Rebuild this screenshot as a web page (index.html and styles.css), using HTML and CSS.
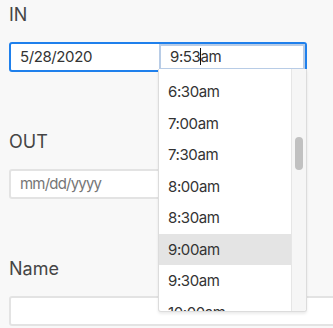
FILE: index.html
```html
<!DOCTYPE html>
<html lang="en">
<head>
  <meta charset="UTF-8" />
  <meta name="viewport" content="width=device-width, initial-scale=1.0" />
  <title>Time Sheet</title>
  <link rel="stylesheet" href="styles.css">
</head>
<body>
  <div class="field">
    <div class="label">IN</div>
    <div class="datetime focused">
      <div class="date">5/28/2020</div>
      <div class="time active">
        9:53<span class="caret"></span>am
        <!-- open time picker -->
        <div class="dropdown">
          <ul class="options">
            <li>6:00am</li>
            <li>6:30am</li>
            <li>7:00am</li>
            <li>7:30am</li>
            <li>8:00am</li>
            <li>8:30am</li>
            <li class="hover">9:00am</li>
            <li>9:30am</li>
            <li>10:00am</li>
            <li>10:30am</li>
          </ul>
          <div class="track"><div class="thumb"></div></div>
        </div>
      </div>
    </div>
  </div>

  <div class="field">
    <div class="label">OUT</div>
    <div class="datetime">
      <div class="date placeholder">mm/dd/yyyy</div>
      <div class="time"></div>
    </div>
  </div>

  <div class="field">
    <div class="label">Name</div>
    <div class="text-input wide"></div>
  </div>
</body>
</html>
```

FILE: styles.css
```css
:root {
  --bg: #f8f8f8;
  --text: #333;
  --label: #454545;
  --border: #e3e3e3;
  --focus: #1f80ec;
  --focus-soft: #b8cce6;
}
* { box-sizing: border-box; }
body {
  margin: 0;
  padding: 4px 9px 0;
  background: var(--bg);
  font-family: "Inter", "Noto Sans", sans-serif;
  color: var(--text);
  overflow: hidden;
}
.field { margin-bottom: 59px; }
.label {
  font-size: 18px;
  line-height: 22px;
  color: var(--label);
  margin-bottom: 16px;
}

/* date + time box */
.datetime {
  display: flex;
  width: 298px;
  height: 30px;
  background: #fff;
  border: 2px solid var(--border);
  border-radius: 3px;
  font-size: 15px;
  letter-spacing: -0.4px;
}
.datetime.focused { border-color: var(--focus); }
.date {
  flex: 1;
  padding-left: 9px;
  line-height: 26px;
}
.placeholder { color: #767676; letter-spacing: -0.8px; }
.time {
  position: relative;
  width: 146px;
  padding-left: 9px;
  line-height: 22px;
  border: 2px solid transparent;
}
.time.active { border-color: var(--focus-soft); }
.caret {
  display: inline-block;
  width: 1px;
  height: 17px;
  margin-right: -1px;
  vertical-align: -3px;
  background: #111;
}

/* time picker */
.dropdown {
  position: absolute;
  top: 100%;
  left: -3px;
  width: 149px;
  height: 243px;
  margin-top: 1px;
  display: flex;
  background: #fff;
  border: 1px solid #dcdcdc;
  border-top: none;
  border-radius: 0 0 3px 3px;
  box-shadow: 0 2px 3px rgba(0,0,0,0.08);
  overflow: hidden;
  z-index: 5;
  letter-spacing: -0.4px;
}
.options {
  flex: 1;
  list-style: none;
  margin: 0;
  padding: 0;
}
.options li {
  height: 31.5px;
  line-height: 31.5px;
  padding-left: 9px;
  font-size: 15px;
}
.options li:first-child { margin-top: -24.25px; }
.options li.hover { background: #e4e4e4; }
.track {
  width: 15px;
  background: #f6f6f6;
  border-left: 1px solid #e6e6e6;
}
.thumb {
  width: 8px;
  height: 33px;
  margin: 68px 0 0 3px;
  border-radius: 4px;
  background: #c1c1c1;
}

.text-input {
  height: 30px;
  background: #fff;
  border: 2px solid var(--border);
  border-radius: 3px;
}
.text-input.wide { width: 420px; }
```
